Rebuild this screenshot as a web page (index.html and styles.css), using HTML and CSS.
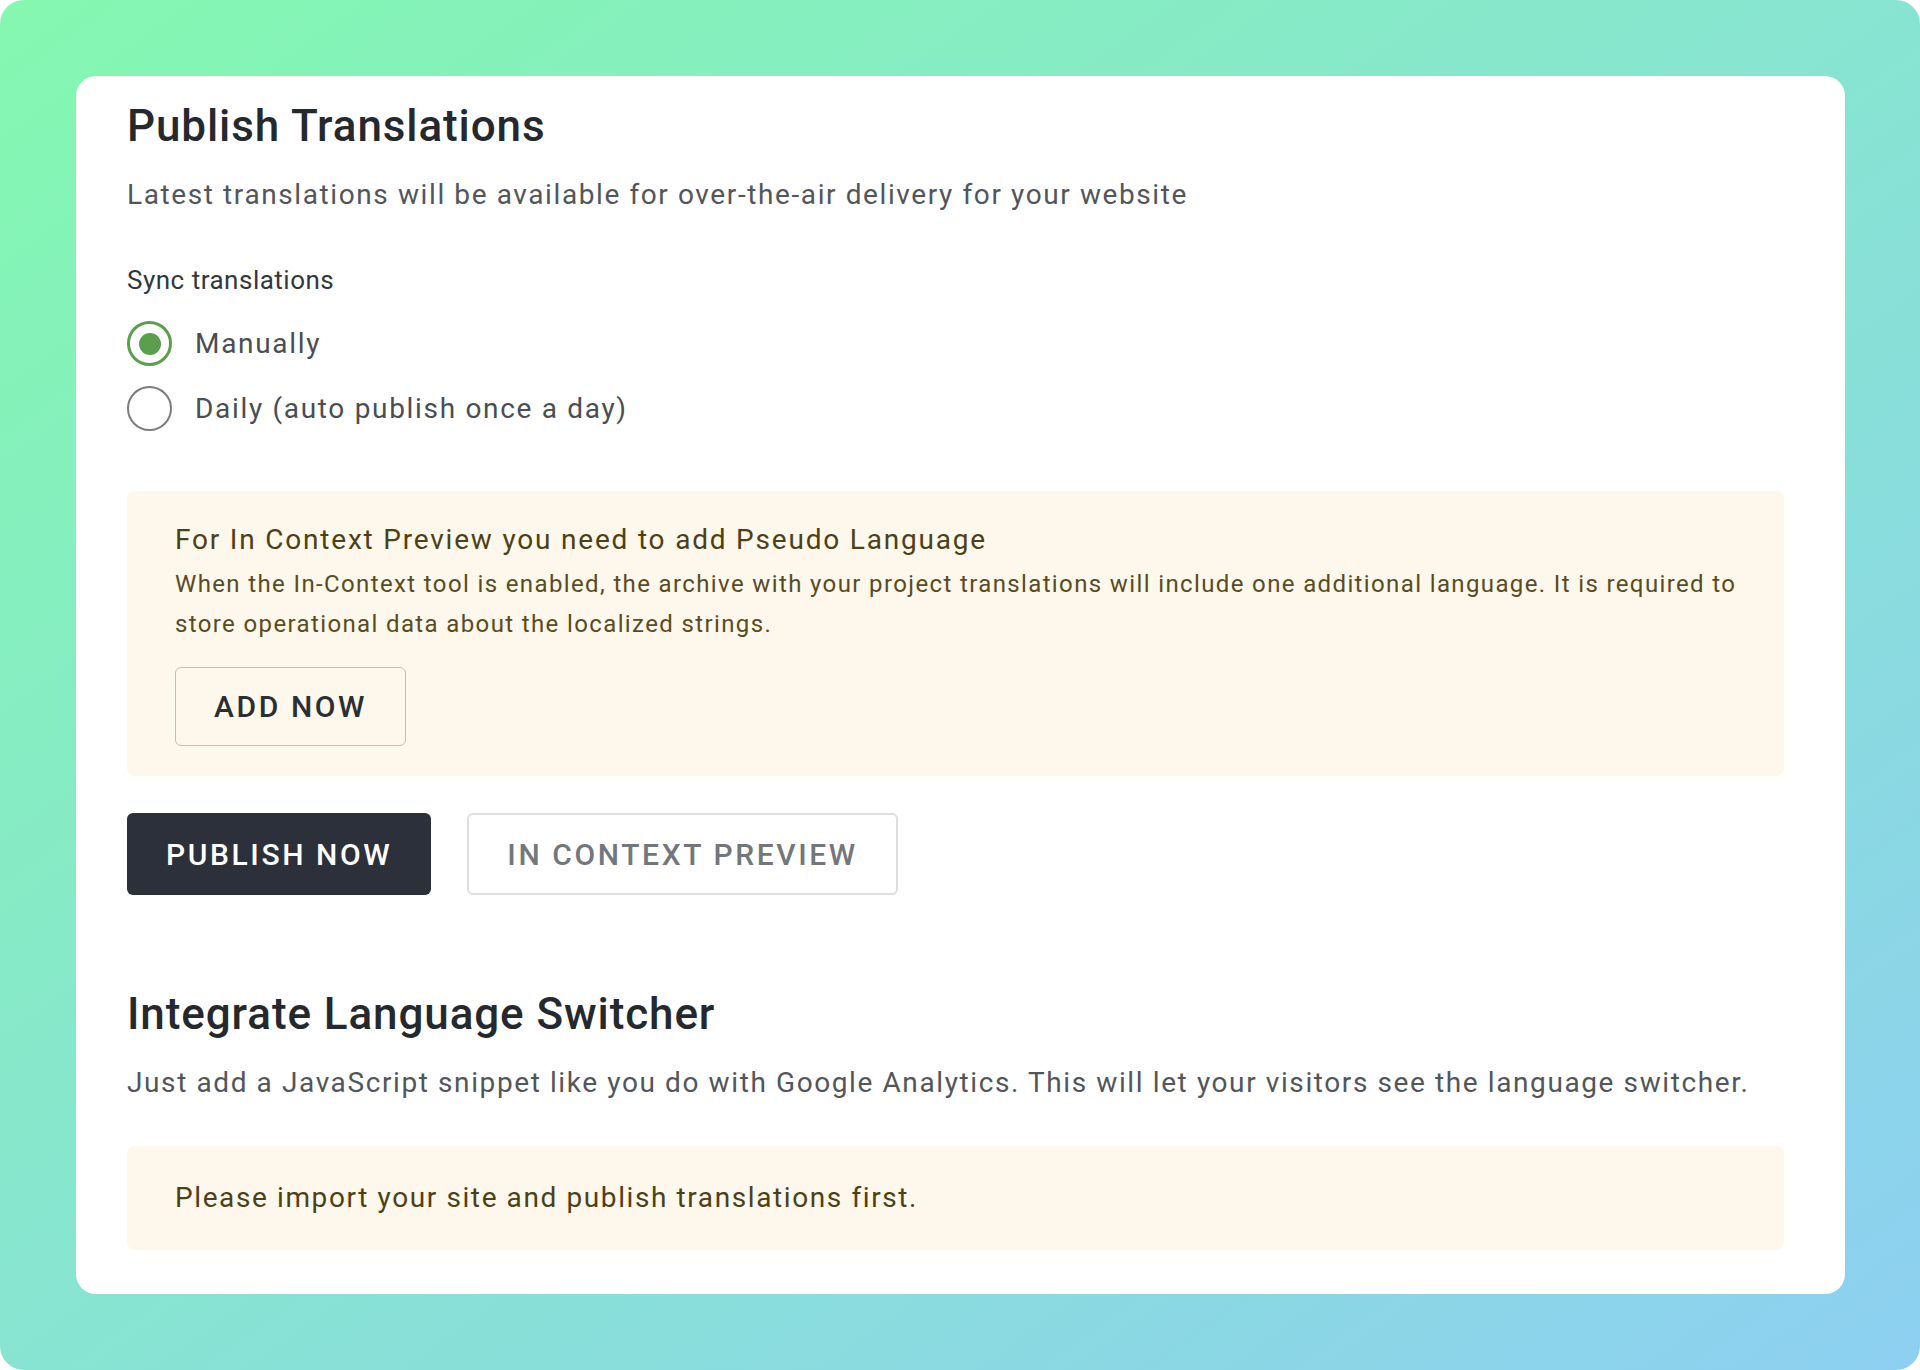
FILE: index.html
```html
<!DOCTYPE html>
<html lang="en">
<head>
    <meta charset="UTF-8">
    <meta name="viewport" content="width=device-width, initial-scale=1.0">
    <title>Publish Translations</title>
    <link rel="stylesheet" href="styles.css">
</head>
<body>
    <div class="frame">
        <div class="card">
            <h1>Publish Translations</h1>
            <p class="lead">Latest translations will be available for over-the-air delivery for your website</p>

            <div class="sync">
                <p class="sync-label">Sync translations</p>
                <label class="option">
                    <input type="radio" name="sync" value="manual" checked>
                    <span>Manually</span>
                </label>
                <label class="option">
                    <input type="radio" name="sync" value="daily">
                    <span>Daily (auto publish once a day)</span>
                </label>
            </div>

            <div class="notice notice-pseudo">
                <h4>For In Context Preview you need to add Pseudo Language</h4>
                <p>When the In-Context tool is enabled, the archive with your project translations will include one additional language. It is required to store operational data about the localized strings.</p>
                <button class="btn btn-outline">Add now</button>
            </div>

            <div class="actions">
                <button class="btn btn-dark">Publish now</button>
                <button class="btn btn-light">In context preview</button>
            </div>

            <h2>Integrate Language Switcher</h2>
            <p class="lead">Just add a JavaScript snippet like you do with Google Analytics. This will let your visitors see the language switcher.</p>

            <div class="notice notice-simple">
                Please import your site and publish translations first.
            </div>
        </div>
    </div>
</body>
</html>
```

FILE: styles.css
```css
body {
    margin: 0;
    background: #fff;
    font-family: Roboto, "Liberation Sans", Arial, sans-serif;
}
.frame {
    height: 1370px;
    box-sizing: border-box;
    padding: 76px 75px 76px 76px;
    border-radius: 24px;
    background: linear-gradient(to bottom right, #84f7b0, #87e4d1 50%, #8dcff1);
}
.card {
    background: #fff;
    border-radius: 20px;
    padding: 24px 61px 45px 51px;
    height: 100%;
    box-sizing: border-box;
}
h1, h2 {
    margin: 0;
    font-size: 44px;
    line-height: 52px;
    font-weight: 500;
    letter-spacing: 0.9px;
    color: #25292e;
}
h2 {
    margin-top: 93px;
}
.lead {
    margin: 23px 0 0;
    font-size: 28px;
    line-height: 40px;
    letter-spacing: 1.6px;
    color: #52565b;
}
.sync {
    margin-top: 49px;
}
.sync-label {
    margin: 0 0 15px;
    font-size: 26px;
    line-height: 32px;
    letter-spacing: 0.5px;
    color: #33373b;
}
.option {
    display: flex;
    align-items: center;
    gap: 23px;
    height: 65px;
    font-size: 28px;
    letter-spacing: 1.68px;
    color: #4a4d52;
    cursor: pointer;
}
.option input {
    appearance: none;
    margin: 0;
    width: 45px;
    height: 45px;
    border: 2px solid #7c7c7c;
    border-radius: 50%;
    box-sizing: border-box;
    display: flex;
    align-items: center;
    justify-content: center;
}
.option input:checked {
    border: 3px solid #5b9e4d;
}
.option input:checked::after {
    content: "";
    width: 22px;
    height: 22px;
    border-radius: 50%;
    background: #5b9e4d;
}
.notice {
    background: #fdf8eb;
    border-radius: 8px;
    color: #4e4016;
}
.notice-pseudo {
    margin-top: 50px;
    padding: 31px 30px 30px 48px;
}
.notice-pseudo h4 {
    margin: 0;
    font-size: 28px;
    line-height: 36px;
    font-weight: 400;
    letter-spacing: 1.8px;
}
.notice-pseudo p {
    margin: 6px 0 23px;
    font-size: 24px;
    line-height: 40px;
    letter-spacing: 1.37px;
    color: #5a4b1f;
}
.notice-simple {
    margin-top: 43px;
    padding: 32px 48px;
    font-size: 28px;
    line-height: 40px;
    letter-spacing: 1.6px;
}
.btn {
    font-family: inherit;
    font-size: 30px;
    font-weight: 500;
    letter-spacing: 2.6px;
    text-transform: uppercase;
    border-radius: 6px;
    cursor: pointer;
    box-sizing: border-box;
}
.btn-outline {
    height: 79px;
    padding: 0 38px;
    background: transparent;
    border: 1.5px solid #bdbdbd;
    color: #2a2e35;
}
.actions {
    display: flex;
    gap: 36px;
    margin-top: 37px;
}
.btn-dark {
    height: 82px;
    padding: 0 39px;
    background: #2c303b;
    border: none;
    color: #fff;
}
.btn-light {
    height: 82px;
    padding: 0 38px;
    background: #fff;
    border: 2px solid #dedede;
    color: #72777c;
}
```
